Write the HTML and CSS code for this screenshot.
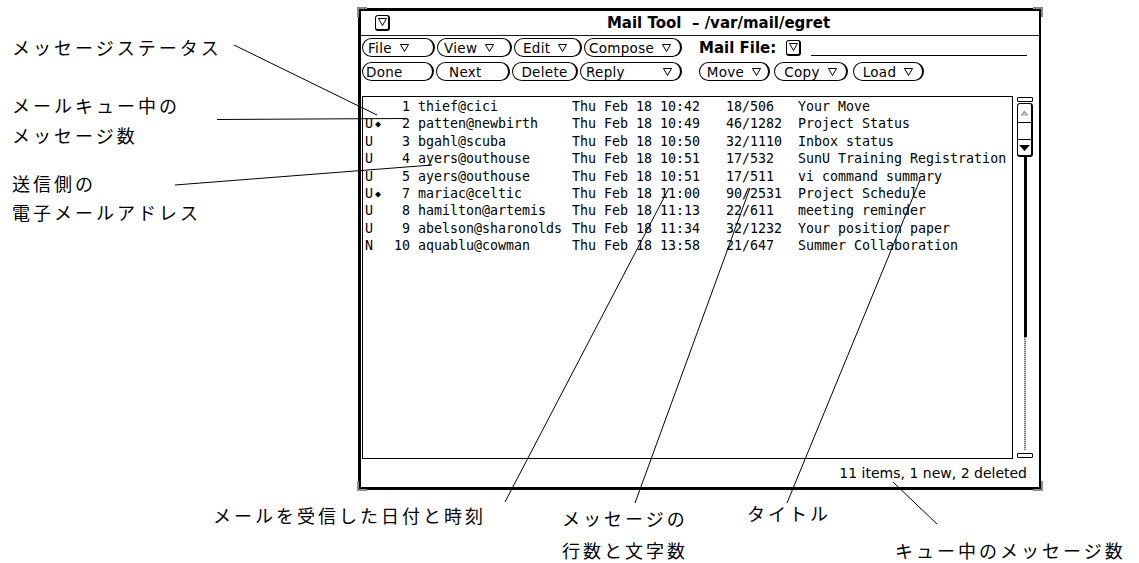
FILE: index.html
```html
<!DOCTYPE html>
<html lang="ja">
<head>
<meta charset="utf-8">
<title>Mail Tool</title>
<link rel="stylesheet" href="styles.css">
</head>
<body>
<div class="figure">
  <div class="window">
    <span class="corner tl"></span>
    <span class="corner tr"></span>
    <span class="corner bl"></span>
    <span class="corner br"></span>
    <div class="titlebar">
      <span class="menubox"><svg width="9" height="8" viewBox="0 0 9 8"><path d="M0.5 0.5H8.5L4.5 7.5Z" fill="none" stroke="#000"/></svg></span>
      <span class="title">Mail Tool&nbsp; – /var/mail/egret</span>
    </div>
    <div class="controls">
      <div class="btnrow">
        <span class="btn b-file">File<svg class="tri" width="9" height="8" viewBox="0 0 9 8"><path d="M0.5 0.5H8.5L4.5 7.5Z" fill="none" stroke="#000"/></svg></span>
        <span class="btn b-view">View<svg class="tri" width="9" height="8" viewBox="0 0 9 8"><path d="M0.5 0.5H8.5L4.5 7.5Z" fill="none" stroke="#000"/></svg></span>
        <span class="btn b-edit">Edit<svg class="tri" width="9" height="8" viewBox="0 0 9 8"><path d="M0.5 0.5H8.5L4.5 7.5Z" fill="none" stroke="#000"/></svg></span>
        <span class="btn b-compose">Compose<svg class="tri" width="9" height="8" viewBox="0 0 9 8"><path d="M0.5 0.5H8.5L4.5 7.5Z" fill="none" stroke="#000"/></svg></span>
        <span class="field-label">Mail File:</span>
        <span class="menubox field-menu"><svg width="9" height="8" viewBox="0 0 9 8"><path d="M0.5 0.5H8.5L4.5 7.5Z" fill="none" stroke="#000"/></svg></span>
        <span class="field-line"></span>
      </div>
      <div class="btnrow">
        <span class="btn b-done">Done</span>
        <span class="btn b-next">Next</span>
        <span class="btn b-delete">Delete</span>
        <span class="btn b-reply">Reply<svg class="tri push" width="9" height="8" viewBox="0 0 9 8"><path d="M0.5 0.5H8.5L4.5 7.5Z" fill="none" stroke="#000"/></svg></span>
        <span class="btn b-move">Move<svg class="tri" width="9" height="8" viewBox="0 0 9 8"><path d="M0.5 0.5H8.5L4.5 7.5Z" fill="none" stroke="#000"/></svg></span>
        <span class="btn b-copy">Copy<svg class="tri" width="9" height="8" viewBox="0 0 9 8"><path d="M0.5 0.5H8.5L4.5 7.5Z" fill="none" stroke="#000"/></svg></span>
        <span class="btn b-load">Load<svg class="tri" width="9" height="8" viewBox="0 0 9 8"><path d="M0.5 0.5H8.5L4.5 7.5Z" fill="none" stroke="#000"/></svg></span>
      </div>
    </div>
    <div class="main">
      <div class="list">
        <div class="row"><span class="st"></span><span class="num">1</span><span class="from">thief@cici</span><span class="date">Thu Feb 18 10:42</span><span class="size">18/506</span><span class="subj">Your Move</span></div>
        <div class="row"><span class="st">U<span class="dia">◆</span></span><span class="num">2</span><span class="from">patten@newbirth</span><span class="date">Thu Feb 18 10:49</span><span class="size">46/1282</span><span class="subj">Project Status</span></div>
        <div class="row"><span class="st">U</span><span class="num">3</span><span class="from">bgahl@scuba</span><span class="date">Thu Feb 18 10:50</span><span class="size">32/1110</span><span class="subj">Inbox status</span></div>
        <div class="row"><span class="st">U</span><span class="num">4</span><span class="from">ayers@outhouse</span><span class="date">Thu Feb 18 10:51</span><span class="size">17/532</span><span class="subj">SunU Training Registration</span></div>
        <div class="row"><span class="st">U</span><span class="num">5</span><span class="from">ayers@outhouse</span><span class="date">Thu Feb 18 10:51</span><span class="size">17/511</span><span class="subj">vi command summary</span></div>
        <div class="row"><span class="st">U<span class="dia">◆</span></span><span class="num">7</span><span class="from">mariac@celtic</span><span class="date">Thu Feb 18 11:00</span><span class="size">90/2531</span><span class="subj">Project Schedule</span></div>
        <div class="row"><span class="st">U</span><span class="num">8</span><span class="from">hamilton@artemis</span><span class="date">Thu Feb 18 11:13</span><span class="size">22/611</span><span class="subj">meeting reminder</span></div>
        <div class="row"><span class="st">U</span><span class="num">9</span><span class="from">abelson@sharonolds</span><span class="date">Thu Feb 18 11:34</span><span class="size">32/1232</span><span class="subj">Your position paper</span></div>
        <div class="row"><span class="st">N</span><span class="num">10</span><span class="from">aquablu@cowman</span><span class="date">Thu Feb 18 13:58</span><span class="size">21/647</span><span class="subj">Summer Collaboration</span></div>
      </div>
      <div class="scrollbar">
        <div class="anchor"></div>
        <div class="elevator">
          <div class="el-seg el-up"><svg width="9" height="6" viewBox="0 0 9 6"><path d="M4.5 0.5L8.5 5.5H0.5Z" fill="#9a9a9a"/><path d="M4.5 3L6 4.6H3Z" fill="#fff"/></svg></div>
          <div class="el-seg el-mid"></div>
          <div class="el-seg el-down"><svg width="11" height="6" viewBox="0 0 11 6"><path d="M0 0H11L5.5 6Z" fill="#000"/></svg></div>
        </div>
        <div class="cable"></div>
        <div class="cable-rest"></div>
        <div class="anchor anchor-bottom"></div>
      </div>
    </div>
    <div class="status">11 items, 1 new, 2 deleted</div>
  </div>

  <div class="label l-status">メッセージステータス</div>
  <div class="label l-count">メールキュー中の<br>メッセージ数</div>
  <div class="label l-sender">送信側の<br>電子メールアドレス</div>
  <div class="label l-date">メールを受信した日付と時刻</div>
  <div class="label l-size">メッセージの<br>行数と文字数</div>
  <div class="label l-title">タイトル</div>
  <div class="label l-total">キュー中のメッセージ数</div>

  <svg class="leaders" width="1139" height="563" viewBox="0 0 1139 563">
    <g stroke="#000" stroke-width="1" fill="none">
      <line x1="234" y1="45" x2="377" y2="115"/>
      <line x1="217" y1="119.5" x2="405" y2="118.5"/>
      <line x1="175" y1="185" x2="432" y2="165"/>
      <line x1="505" y1="502" x2="669" y2="188"/>
      <line x1="635" y1="503" x2="750" y2="188"/>
      <line x1="787" y1="503" x2="920" y2="180"/>
      <line x1="893" y1="482" x2="937" y2="524"/>
    </g>
  </svg>
</div>
</body>
</html>
```

FILE: styles.css
```css
* { box-sizing: border-box; }
html, body { margin: 0; padding: 0; background: #fff; }
body {
  width: 1139px;
  height: 563px;
  overflow: hidden;
  font-family: "DejaVu Sans", "Liberation Sans", sans-serif;
  color: #000;
}
.figure { position: relative; width: 1139px; height: 563px; }

/* window frame */
.window {
  position: absolute;
  left: 358px;
  top: 8px;
  width: 683px;
  height: 482px;
  border: 3px solid #000;
  border-right-width: 2px;
  display: flex;
  flex-direction: column;
  background: #fff;
}
.corner {
  position: absolute;
  width: 10px;
  height: 10px;
  border: 0 solid #8a8a8a;
}
.corner.tl { left: -4px; top: -4px; border-left-width: 2px; border-top-width: 2px; }
.corner.tr { right: -4px; top: -4px; border-right-width: 2px; border-top-width: 2px; }
.corner.bl { left: -4px; bottom: -4px; border-left-width: 2px; border-bottom-width: 2px; }
.corner.br { right: -4px; bottom: -4px; border-right-width: 2px; border-bottom-width: 2px; }

/* title bar */
.titlebar {
  height: 25px;
  border-bottom: 1px solid #1a1a1a;
  display: flex;
  align-items: center;
  padding-left: 14px;
  padding-bottom: 1px;
}
.menubox {
  width: 15px;
  height: 16px;
  border: 1px solid #000;
  border-right-width: 2px;
  border-bottom-width: 2px;
  border-radius: 3px;
  display: flex;
  align-items: center;
  justify-content: center;
  flex: none;
}
.title {
  flex: 1;
  text-align: center;
  font-weight: bold;
  font-size: 15px;
  padding-left: 8px;
  white-space: nowrap;
}

/* control panel */
.controls {
  padding: 2px 0 0 1px;
  display: flex;
  flex-direction: column;
  gap: 5px;
}
.btnrow {
  display: flex;
  align-items: center;
  height: 19px;
  gap: 2px;
}
.btn {
  height: 19px;
  border: 1px solid #000;
  border-right-width: 2px;
  border-radius: 10px;
  display: flex;
  align-items: center;
  justify-content: center;
  gap: 8px;
  font-size: 13.5px;
  letter-spacing: 0.3px;
  white-space: nowrap;
  flex: none;
}
.tri { flex: none; }
.tri.push { margin-left: auto; }
.b-file { width: 73px; justify-content: flex-start; padding-left: 5px; }
.b-view { width: 75px; justify-content: flex-start; padding-left: 6px; }
.b-edit { width: 68px; justify-content: flex-start; padding-left: 8px; }
.b-compose { width: 98px; justify-content: flex-start; padding-left: 4px; }
.b-done { width: 72px; justify-content: flex-start; padding-left: 3px; }
.b-next { width: 74px; justify-content: flex-start; padding-left: 12px; }
.b-delete { width: 66px; }
.b-reply { width: 102px; justify-content: flex-start; padding-left: 5px; padding-right: 8px; }
.b-move { width: 71px; margin-left: 15px; }
.b-copy { width: 74px; margin-left: 2px; }
.b-load { width: 71px; margin-left: 3px; }

.field-label {
  margin-left: 15px;
  font-weight: bold;
  font-size: 15px;
  white-space: nowrap;
}
.field-menu { margin-left: 8px; height: 16px; }
.field-line {
  flex: 1;
  align-self: flex-end;
  margin: 0 12px 1px 8px;
  border-bottom: 1px solid #000;
}

/* main area */
.main {
  margin-top: 15px;
  height: 363px;
  display: flex;
  padding-left: 1px;
}
.list {
  width: 651px;
  height: 363px;
  border: 1px solid #000;
  padding: 1px 0 0 2px;
  font-family: "DejaVu Sans Mono", "Liberation Mono", monospace;
  font-size: 13.3px;
}
.row {
  display: grid;
  grid-template-columns: 24px 21px 162px 154px 72px 1fr;
  height: 17.4px;
  line-height: 17.4px;
  white-space: pre;
}
.num { text-align: right; }
.from { padding-left: 8px; }
.dia { font-size: 10px; margin-left: 2px; vertical-align: 1px; }

/* scrollbar */
.scrollbar {
  width: 16px;
  margin-left: 4px;
  padding-top: 1px;
  display: flex;
  flex-direction: column;
  align-items: center;
}
.anchor {
  width: 16px;
  height: 5px;
  border: 1px solid #000;
  border-radius: 1px;
  flex: none;
}
.anchor-bottom { margin-top: 3px; }
.elevator {
  margin-top: 1px;
  width: 16px;
  height: 54px;
  border: 1px solid #000;
  border-right-width: 2px;
  border-bottom-width: 2px;
  border-radius: 3px;
  display: flex;
  flex-direction: column;
  flex: none;
}
.el-seg { display: flex; align-items: center; justify-content: center; }
.el-up { height: 19px; border-bottom: 1px solid #000; }
.el-mid { height: 17px; border-bottom: 1px solid #000; }
.el-down { flex: 1; }
.cable { width: 3px; height: 180px; background: #000; flex: none; }
.cable-rest {
  width: 2px;
  height: 113px;
  flex: none;
  background: repeating-linear-gradient(#7a7a7a 0 1px, #d0d0d0 1px 2px);
}

/* status line */
.status {
  height: 28px;
  display: flex;
  align-items: center;
  justify-content: flex-end;
  padding-right: 12px;
  font-size: 14px;
  white-space: nowrap;
}

/* callout labels */
.label {
  position: absolute;
  font-family: "Noto Sans CJK JP", "Noto Sans", sans-serif;
  font-size: 18px;
  letter-spacing: 3px;
  line-height: 24px;
  white-space: nowrap;
  color: #000;
}
.l-status { left: 12px; top: 35px; }
.l-count { left: 12px; top: 90px; line-height: 30px; }
.l-sender { left: 12px; top: 169px; line-height: 29px; }
.l-date { left: 213px; top: 503px; }
.l-size { left: 562px; top: 502px; line-height: 32px; }
.l-title { left: 747px; top: 501px; }
.l-total { left: 895px; top: 538px; }

.leaders {
  position: absolute;
  left: 0;
  top: 0;
  pointer-events: none;
}
```
